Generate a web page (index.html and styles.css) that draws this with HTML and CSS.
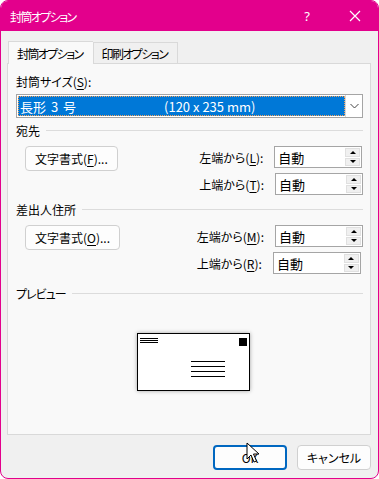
FILE: index.html
```html
<!DOCTYPE html>
<html lang="ja">
<head>
  <meta charset="UTF-8" />
  <title>封筒オプション</title>
  <link rel="stylesheet" href="styles.css">
</head>
<body>
  <div class="window">
    <div class="titlebar">
      <span class="title">封筒オプション</span>
      <span class="help">?</span>
      <span class="close">
        <svg width="12" height="12" viewBox="0 0 12 12"><path d="M1 1 L11 11 M11 1 L1 11" stroke="#fff" stroke-width="1.2" fill="none"/></svg>
      </span>
    </div>

    <div class="content">
      <div class="tabs">
        <div class="tab active">封筒オプション</div>
        <div class="tab">印刷オプション</div>
      </div>

      <div class="panel">
        <div class="label">封筒サイズ(<u>S</u>):</div>
        <div class="select">
          <div class="select-value">
            <span>長形 3 号</span>
            <span class="dims">(120 x 235 mm)</span>
          </div>
          <div class="select-arrow">
            <svg width="9" height="6" viewBox="0 0 9 6"><path d="M0.5 1 L4.5 5 L8.5 1" stroke="#444" fill="none"/></svg>
          </div>
        </div>

        <div class="group-head"><span>宛先</span><div class="line"></div></div>
        <div class="group">
          <button class="btn">文字書式(<u>F</u>)...</button>
          <div class="fields">
            <div class="field">
              <span>左端から(<u>L</u>):</span>
              <div class="spin"><span>自動</span><div class="spin-btns"><div class="up"></div><div class="down"></div></div></div>
            </div>
            <div class="field">
              <span>上端から(<u>T</u>):</span>
              <div class="spin"><span>自動</span><div class="spin-btns"><div class="up"></div><div class="down"></div></div></div>
            </div>
          </div>
        </div>

        <div class="group-head"><span>差出人住所</span><div class="line"></div></div>
        <div class="group">
          <button class="btn">文字書式(<u>O</u>)...</button>
          <div class="fields">
            <div class="field">
              <span>左端から(<u>M</u>):</span>
              <div class="spin"><span>自動</span><div class="spin-btns"><div class="up"></div><div class="down"></div></div></div>
            </div>
            <div class="field">
              <span>上端から(<u>R</u>):</span>
              <div class="spin"><span>自動</span><div class="spin-btns"><div class="up"></div><div class="down"></div></div></div>
            </div>
          </div>
        </div>

        <div class="group-head preview-head"><span class="kana">プレビュー</span><div class="line"></div></div>
        <div class="preview">
          <div class="envelope">
            <div class="env-top">
              <div class="return-lines"><i></i><i></i><i></i></div>
              <div class="stamp"></div>
            </div>
            <div class="address-lines"><i></i><i></i><i></i><i></i></div>
          </div>
        </div>
      </div>

      <div class="footer">
        <button class="btn ok">OK</button>
        <button class="btn cancel">キャンセル</button>
      </div>
    </div>

    <svg class="cursor" width="14" height="22" viewBox="0 0 14 22">
      <path d="M1 1 L1 17 L5 13 L8 20 L10.5 19 L7.5 12 L13 12 Z" fill="#fff" stroke="#000" stroke-width="1"/>
    </svg>
  </div>
</body>
</html>
```

FILE: styles.css
```css
* {
  box-sizing: border-box;
}

body {
  margin: 0;
  font-family: "Noto Sans CJK JP", "Noto Sans", sans-serif;
  font-size: 12px;
  font-feature-settings: "palt";
  color: #000;
  background: #fff;
}

.window {
  position: relative;
  width: 379px;
  height: 479px;
  border: 1px solid #e3008c;
  border-radius: 8px;
  overflow: hidden;
  background: #f0f0f0;
  display: flex;
  flex-direction: column;
}

.titlebar {
  height: 30px;
  background: #e3008c;
  color: #fff;
  display: flex;
  align-items: center;
  padding-left: 9px;
}

.title {
  flex: 1;
  font-size: 12px;
  letter-spacing: -1.6px;
}

.help {
  width: 46px;
  text-align: center;
  font-family: "Noto Sans", sans-serif;
  font-size: 13px;
  margin-right: 2px;
}

.close {
  width: 46px;
  display: flex;
  justify-content: center;
}

.content {
  flex: 1;
  padding: 9px 7px 0 6px;
  display: flex;
  flex-direction: column;
}

.tabs {
  display: flex;
  align-items: flex-end;
  padding-left: 1px;
  height: 23px;
}

.tab {
  height: 21px;
  padding: 0 10px 0 8px;
  border: 1px solid #d9d9d9;
  border-bottom: none;
  background: #f0f0f0;
  display: flex;
  align-items: center;
  letter-spacing: -1.6px;
}

.tab.active {
  height: 23px;
  background: #f9f9f9;
  position: relative;
  top: 1px;
  border-right: none;
}

.panel {
  height: 372px;
  background: #f9f9f9;
  border: 1px solid #d9d9d9;
  padding: 9px 7px 0 8px;
}

.label {
  height: 18px;
  line-height: 18px;
}

.kana {
  letter-spacing: -1px;
}

u {
  text-decoration: underline;
  text-underline-offset: 2px;
}

.select {
  margin-top: 3px;
  height: 24px;
  border: 1px solid #a5a5a5;
  background: #fff;
  display: flex;
  padding: 1px;
}

.select-value {
  flex: 1;
  background: #0078d7;
  color: #fff;
  outline: 1px dotted #f3a35c;
  outline-offset: -1px;
  display: flex;
  align-items: center;
  padding-left: 2px;
  font-size: 13px;
  word-spacing: 2px;
}

.dims {
  margin-left: 88px;
  word-spacing: 0;
}

.select-arrow {
  width: 17px;
  display: flex;
  align-items: center;
  justify-content: center;
  border-left: 1px solid #d9d9d9;
  margin: -1px -1px -1px 0;
}

.group-head {
  display: flex;
  align-items: center;
  height: 14px;
  margin-top: 5px;
}

.group-head.preview-head {
  margin-top: 12px;
}

.group-head .line {
  flex: 1;
  height: 1px;
  background: #dcdcdc;
  margin-left: 6px;
}

.group {
  display: flex;
  justify-content: space-between;
  padding-left: 9px;
  margin-top: 9px;
  margin-bottom: 7px;
}

.btn {
  font-family: inherit;
  font-size: 12px;
  font-feature-settings: "palt";
  background: #fdfdfd;
  border: 1px solid #d0d0d0;
  border-radius: 4px;
  height: 25px;
  padding: 0 9px;
  color: #000;
  white-space: nowrap;
}

.fields {
  display: flex;
  flex-direction: column;
  gap: 5px;
}

.field {
  display: flex;
  align-items: center;
  gap: 11px;
}

.spin {
  width: 88px;
  height: 22px;
  border: 1px solid #a5a5a5;
  background: #fff;
  display: flex;
  align-items: center;
  justify-content: space-between;
  padding: 1px 1px 1px 3px;
  font-size: 13px;
}

.spin-btns {
  width: 15px;
  height: 18px;
  display: flex;
  flex-direction: column;
  gap: 1px;
}

.spin-btns div {
  flex: 1;
  background: #f0f0f0;
  border: 1px solid #e0e0e0;
  display: flex;
  align-items: center;
  justify-content: center;
}

.spin-btns .up::after {
  content: "";
  border-left: 3px solid transparent;
  border-right: 3px solid transparent;
  border-bottom: 3px solid #000;
}

.spin-btns .down::after {
  content: "";
  border-left: 3px solid transparent;
  border-right: 3px solid transparent;
  border-top: 3px solid #000;
}

.preview {
  padding: 33px 0 0 121px;
}

.envelope {
  width: 113px;
  height: 58px;
  background: #fff;
  border: 1px solid #000;
  box-shadow: 0 0 4px rgba(0, 0, 0, 0.35);
  padding: 4px 2px 0 2px;
}

.env-top {
  display: flex;
  justify-content: space-between;
}

.return-lines {
  display: flex;
  flex-direction: column;
  gap: 1px;
  width: 18px;
}

.return-lines i,
.address-lines i {
  display: block;
  height: 1px;
  background: #000;
}

.stamp {
  width: 8px;
  height: 8px;
  background: #000;
}

.address-lines {
  display: flex;
  flex-direction: column;
  gap: 4px;
  width: 34px;
  margin: 15px 0 0 51px;
}

.footer {
  display: flex;
  justify-content: flex-end;
  gap: 10px;
  padding-top: 10px;
}

.footer .btn {
  width: 74px;
  padding: 0;
}

.btn.ok {
  border: 2px solid #0067c0;
}

.cursor {
  position: absolute;
  left: 245px;
  top: 441px;
}
```
